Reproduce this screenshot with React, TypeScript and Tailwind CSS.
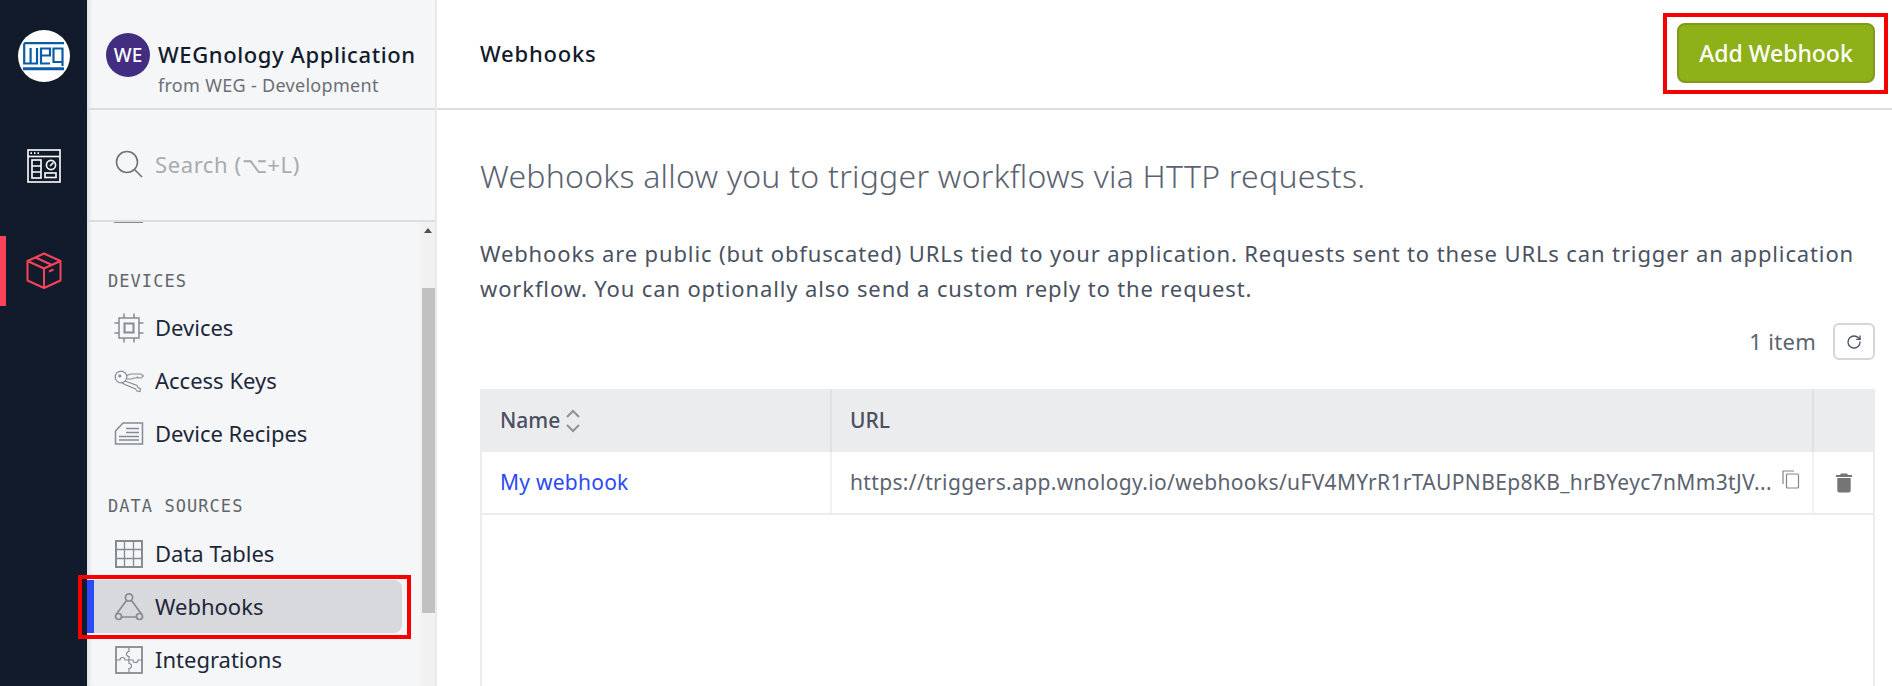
import React from 'react';
import { RotateCw } from 'lucide-react';

const sans = 'font-["Noto_Sans",sans-serif]';

const WegLogo = () => (
  <svg width="42" height="29" viewBox="0 0 42 29" fill="none" stroke="#0b5ca6" strokeWidth="2.2">
    <path d="M1.200 1.200H41" />
    <path d="M1.200 1.200V21.500H14V6M7.600 6V21.500" />
    <path d="M27 21.500H18V6.500H27V13.500H18" />
    <path d="M40.500 6.500H30.500V20H39.500M39.500 6.500V24" />
    <path d="M0 26.700H41" strokeWidth="3" />
  </svg>
);

const DashboardIcon = () => (
  <svg width="34" height="34" viewBox="0 0 34 34" fill="none" stroke="#fff" strokeWidth="1.6">
    <rect x="1" y="1" width="32" height="32" />
    <path d="M1 7.5H33" />
    <path d="M3.5 4.2h1.5M7 4.2h1.5M10.5 4.2h1.5" strokeWidth="1.8" />
    <rect x="5" y="11" width="9" height="18" />
    <path d="M5 17h9M5 23h9" />
    <circle cx="24" cy="16" r="4.6" />
    <path d="M23 17l3.5-3.5" />
    <rect x="18" y="24" width="11" height="4.5" />
  </svg>
);

const CubeIcon = () => (
  <svg width="36" height="38" viewBox="0 0 36 38" fill="none" stroke="#fa4358" strokeWidth="2" strokeLinejoin="round">
    <path d="M18 1.5L34.5 9V28.5L18 36L1.5 28.5V9Z" />
    <path d="M1.5 9L18 16.5L34.5 9M18 16.5V36" />
    <path d="M9.5 5.5L26 13" />
    <path d="M23 19.5l4.5-2" />
  </svg>
);

const iconProps = { width: 30, height: 30, viewBox: '0 0 30 30', fill: 'none', stroke: '#858b93', strokeWidth: 1.5 };

const ChipIcon = () => (
  <svg {...iconProps}>
    <rect x="5" y="5" width="20" height="20" />
    <rect x="10.5" y="10.5" width="9" height="9" strokeWidth="2" />
    <path d="M10 0.5V5M20 0.5V5M10 25V29.5M20 25V29.5M0.5 10H5M0.5 20H5M25 10H29.5M25 20H29.5" />
  </svg>
);

const KeyIcon = () => (
  <svg {...iconProps}>
    <circle cx="7" cy="11" r="5.800" strokeWidth="1.200" />
    <circle cx="5.800" cy="10" r="1.500" fill="#858b93" strokeWidth="0" />
    <path d="M12.500 9.500L17 8H27L29.500 10L27 12H24.500L23.500 11L22.500 12H20L18 13H13" strokeWidth="1.100" />
    <path d="M11 15L23 19.500L24 21.500L26.500 23L26 25.500L23 25L21.500 23L11 18.500L8 17" strokeWidth="1.100" />
  </svg>
);

const RecipeIcon = () => (
  <svg {...iconProps}>
    <path d="M1.500 12L9 4H28.500V25H1.500Z" />
    <path d="M12 9.500H25M12 13.500H25M5 17.500H25M5 21H25" />
  </svg>
);

const TableIcon = () => (
  <svg {...iconProps}>
    <rect x="2" y="2" width="26" height="26" strokeWidth="2" />
    <path d="M10.500 2V28M19.500 2V28M2 10.500H28M2 19.500H28" strokeWidth="1.300" />
  </svg>
);

const WebhookIcon = () => (
  <svg {...iconProps} strokeWidth={1.7}>
    <circle cx="15" cy="5.500" r="3.600" />
    <circle cx="4.500" cy="24.500" r="3" />
    <circle cx="25.500" cy="24.500" r="3" />
    <path d="M12.500 8.500L2.500 22M17.500 8.500L27.500 22M7.500 25H22.500" />
  </svg>
);

const PuzzleIcon = () => (
  <svg {...iconProps}>
    <rect x="2" y="2" width="26" height="26" strokeWidth="1.800" />
    <path
      d="M15 2V6.500a2.500 2.500 0 1 0 0 5V15M2 15H6a2.500 2.500 0 1 1 5 0H15M15 15H19a2.500 2.500 0 1 0 5 0H28M15 15V18.500a2.500 2.500 0 1 1 0 5V28"
      strokeWidth="1.200"
    />
  </svg>
);

const NavItem = ({ icon, label, active }: { icon: React.ReactNode; label: string; active?: boolean }) => (
  <div
    className={
      'flex h-[53px] items-center gap-[11px] pl-[27px] text-[22px] text-[#1d2739] ' +
      (active ? 'rounded-r-lg bg-[#d8d9dd]' : '')
    }
  >
    <span className="flex w-[30px] justify-center">{icon}</span>
    <span>{label}</span>
  </div>
);

const SectionLabel = ({ children }: { children: string }) => (
  <div className='h-7 pl-[21px] font-["DejaVu_Sans_Mono",monospace] text-[17px] leading-7 tracking-[1.05px] text-[#62666c]'>
    {children}
  </div>
);

const Sidebar = () => (
  <aside className="flex h-full w-[350px] shrink-0 flex-col border-r-2 border-[#e8e9eb] bg-[#f4f6f8] shadow-[inset_6px_0_6px_-6px_rgba(0,0,0,0.18)]">
    <div className="flex h-[110px] shrink-0 items-start gap-2 border-b-2 border-[#dcdde0] pl-[19px]">
      <div className="mt-[33px] flex size-11 items-center justify-center rounded-full bg-[#432d80] text-[19px] font-medium text-white">
        WE
      </div>
      <div className="mt-[36px]">
        <div className="text-[22px] leading-[36px] font-medium tracking-[0.6px] text-[#111b2c]">WEGnology Application</div>
        <div className="pt-[1px] text-[18px] leading-[24px] tracking-[0.3px] text-[#6b6f75]">from WEG - Development</div>
      </div>
    </div>

    <div className="flex h-[112px] shrink-0 items-center gap-[12px] border-b-2 border-[#dcdde0] pb-[2px] pl-[28px] text-[22px] tracking-[0.6px] text-[#a9abaf]">
      <svg width="28" height="28" viewBox="0 0 28 28" fill="none" stroke="#6e747c" strokeWidth="1.600">
        <circle cx="12" cy="12" r="10.500" />
        <path d="M19.500 19.500L27 27" />
      </svg>
      <span>Search (⌥+L)</span>
    </div>

    <div className="flex min-h-0 flex-1">
      <div className="min-w-0 flex-1">
        <div className="ml-[27px] h-[1px] w-[29px] bg-[#858b93]" />
        <div className="h-[44px]" />
        <SectionLabel>DEVICES</SectionLabel>
        <div className="h-[6px]" />
        <NavItem icon={<ChipIcon />} label="Devices" />
        <NavItem icon={<KeyIcon />} label="Access Keys" />
        <NavItem icon={<RecipeIcon />} label="Device Recipes" />
        <div className="h-[32px]" />
        <SectionLabel>DATA SOURCES</SectionLabel>
        <div className="h-[7px]" />
        <NavItem icon={<TableIcon />} label="Data Tables" />
        <div className="relative mr-[18px]">
          <div className="absolute inset-y-0 left-0 w-[7px] bg-[#2a4bf5]" />
          <NavItem icon={<WebhookIcon />} label="Webhooks" active />
          <div className="pointer-events-none absolute -top-[5px] -right-[9px] -bottom-[6px] -left-[9px] border-[4px] border-[#f60000]" />
        </div>
        <NavItem icon={<PuzzleIcon />} label="Integrations" />
      </div>
      <div className="flex w-[15px] shrink-0 flex-col bg-[#f1f1f1] pl-[2px]">
        <div className="mt-[6px] ml-[2px] h-0 w-0 border-x-[4px] border-b-[5px] border-x-transparent border-b-[#505050]" />
        <div className="mt-[55px] h-[325px] bg-[#c1c1c1]" />
      </div>
    </div>
  </aside>
);

const CopyIcon = () => (
  <svg width="18" height="20" viewBox="0 0 18 20" fill="none" stroke="#80858c" strokeWidth="1.200">
    <path d="M1 14V1H12" />
    <rect x="4.500" y="4" width="12" height="14" rx="1" />
  </svg>
);

const TrashIcon = () => (
  <svg width="16" height="20" viewBox="0 0 16 20" fill="#757575">
    <path d="M5 0.500h6l1 1.500h4v2H0V2h4ZM1.300 5h13.400v12.500A2 2 0 0 1 12.700 19.500H3.300A2 2 0 0 1 1.300 17.500Z" />
  </svg>
);

export default function App() {
  return (
    <div className={'flex h-[686px] w-[1892px] overflow-hidden bg-white ' + sans}>
      <nav className="flex w-[87px] shrink-0 flex-col items-center bg-[#111b2c]">
        <div className="mt-[30px] flex size-[52px] items-center justify-center rounded-full bg-white">
          <WegLogo />
        </div>
        <div className="mt-[67px]">
          <DashboardIcon />
        </div>
        <div className="relative mt-[53px] flex h-[70px] w-full items-center justify-center">
          <div className="absolute inset-y-0 left-0 w-[6px] bg-[#fa4358]" />
          <CubeIcon />
        </div>
      </nav>

      <Sidebar />

      <main className="flex min-w-0 flex-1 flex-col">
        <header className="flex h-[110px] shrink-0 items-center justify-between border-b-2 border-[#dcdde0] pr-[17px] pl-[43px]">
          <h1 className="mb-[2px] text-[22px] font-medium tracking-[0.8px] text-[#111b2c]">Webhooks</h1>
          <div className="relative mb-[2px]">
            <button className="h-[60px] w-[198px] rounded-lg border-2 border-[#7f9a1c] bg-[#8eb018] text-[23px] font-medium text-white">
              Add Webhook
            </button>
            <div className="pointer-events-none absolute -top-[10px] -right-[13px] -bottom-[11px] -left-[14px] border-[4px] border-[#f60000]" />
          </div>
        </header>

        <div className="flex min-h-0 flex-1 flex-col pr-[17px] pl-[43px]">
          <h2 className="mt-[42px] text-[32px] leading-[48px] font-light tracking-[0.25px] text-[#5b6370]">
            Webhooks allow you to trigger workflows via HTTP requests.
          </h2>
          <p className="mt-[36px] text-[22px] leading-[35px] tracking-[0.87px] text-[#4a5261]">
            Webhooks are public (but obfuscated) URLs tied to your application. Requests sent to these URLs can trigger an
            application workflow. You can optionally also send a custom reply to the request.
          </p>
          <div className="mt-[17px] flex items-center justify-end gap-[17px]">
            <span className="text-[22px] tracking-[0.3px] text-[#5b6370]">1 item</span>
            <button className="flex h-[37px] w-[42px] items-center justify-center rounded-md border-2 border-[#d5d6d9]">
              <RotateCw size={16} color="#4a5261" />
            </button>
          </div>

          <div className="mt-[29px] flex min-h-0 flex-1 flex-col border-x-2 border-[#ebecee]">
            <div className="-mx-[2px] flex h-[63px] shrink-0 bg-[#ebecee] text-[21px] font-medium text-[#4a5060]">
              <div className="flex w-[352px] items-center gap-[5px] border-r-2 border-[#e0e1e4] pl-5">
                Name
                <svg width="16" height="26" viewBox="0 0 16 26" fill="none" stroke="#8e9198" strokeWidth="2">
                  <path d="M2 9L8 3L14 9M2 17L8 23L14 17" />
                </svg>
              </div>
              <div className="flex flex-1 items-center border-r-2 border-[#e0e1e4] pl-[18px]">URL</div>
              <div className="w-[61px]" />
            </div>
            <div className="flex h-[63px] shrink-0 border-b-2 border-[#ebecee]">
              <div className="flex w-[350px] items-center border-r-2 border-[#f0f1f2] pl-[18px] text-[21px] tracking-[0.25px] text-[#2a4bf5]">
                My webhook
              </div>
              <div className="flex min-w-0 flex-1 items-center justify-between border-r-2 border-[#f0f1f2] pr-[12px] pl-[18px] text-[21px] tracking-[0.35px] text-[#5b6370]">
                <span className="whitespace-nowrap">https://triggers.app.wnology.io/webhooks/uFV4MYrR1rTAUPNBEp8KB_hrBYeyc7nMm3tJV...</span>
                <span className="mb-[6px] shrink-0">
                  <CopyIcon />
                </span>
              </div>
              <div className="flex w-[59px] items-center justify-center">
                <TrashIcon />
              </div>
            </div>
          </div>
        </div>
      </main>
    </div>
  );
}
